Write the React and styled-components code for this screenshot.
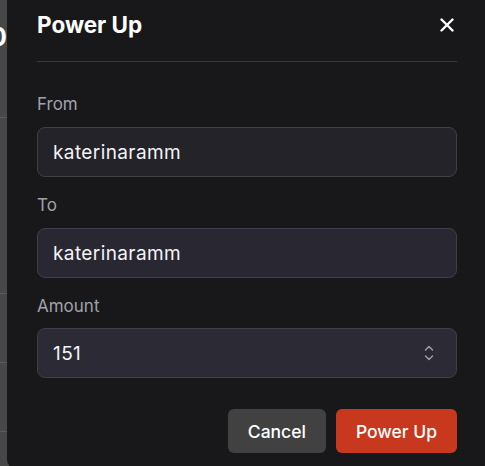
import React from "react";
import styled, { createGlobalStyle } from "styled-components";

const Global = createGlobalStyle`
  html, body { margin: 0; padding: 0; height: 100%; overflow: hidden; }
  body { background: #474747; font-family: Inter, "Noto Sans", sans-serif; }
  #root { height: 100%; }
`;

const Backdrop = styled.div`
  height: 100%;
  display: flex;
  flex-direction: column;
  background: #474747;
`;

const BgRow = styled.div`
  height: ${(p) => p.h}px;
  flex: none;
  border-bottom: 1px solid #5a5a5a;
  box-sizing: border-box;
  overflow: hidden;
  position: relative;
`;

const BgDigit = styled.span`
  display: block;
  margin: 22px 0 0 -10px;
  font-size: 25px;
  font-weight: 700;
  color: #ffffff;
  line-height: 30px;
`;

const Dialog = styled.div`
  position: fixed;
  left: 7px;
  top: -10px;
  width: 480px;
  height: 478px;
  box-sizing: border-box;
  padding: 0 30px;
  background: #18181b;
  border-radius: 8px;
  display: flex;
  flex-direction: column;
`;

const Header = styled.div`
  display: flex;
  align-items: center;
  justify-content: space-between;
  padding: 21px 0 22px;
  border-bottom: 1px solid #37373b;
`;

const Title = styled.h2`
  margin: 0;
  font-size: 22.5px;
  line-height: 28px;
  font-weight: 700;
  color: #ffffff;
`;

const CloseButton = styled.button`
  width: 20px;
  height: 20px;
  padding: 0;
  border: 0;
  background: transparent;
  display: flex;
  align-items: center;
  justify-content: center;
  color: #ffffff;
  cursor: pointer;
`;

const Body = styled.div`
  padding-top: 30px;
  display: flex;
  flex-direction: column;
  gap: 16px;
`;

const Field = styled.div`
  display: flex;
  flex-direction: column;
  gap: ${(p) => p.gap || 11}px;
`;

const Label = styled.label`
  font-size: 17px;
  line-height: 24px;
  color: #a1a1aa;
`;

const InputBox = styled.div`
  height: 50px;
  box-sizing: border-box;
  border: 1px solid #3f3f46;
  border-radius: 8px;
  background: ${(p) => p.bg};
  display: flex;
  align-items: center;
  padding: 0 22px 0 15px;
`;

const InputText = styled.span`
  flex: 1;
  font-size: 19px;
  letter-spacing: 0.4px;
  color: #f4f4f5;
`;

const Footer = styled.div`
  margin-top: 31px;
  display: flex;
  justify-content: flex-end;
  gap: 10px;
`;

const Button = styled.button`
  height: 44px;
  padding: 0 20px;
  border: 0;
  border-radius: 6px;
  font-family: Inter, "Noto Sans", sans-serif;
  font-size: 17.5px;
  font-weight: 500;
  color: #ffffff;
  background: ${(p) => (p.primary ? "#c8381f" : "#414141")};
  cursor: pointer;
`;

const XIcon = () => (
  <svg width="14" height="14" viewBox="0 0 14 14" fill="none">
    <path d="M1.5 1.5L12.5 12.5M12.5 1.5L1.5 12.5" stroke="currentColor" strokeWidth="2.4" strokeLinecap="round" />
  </svg>
);

const SpinIcon = () => (
  <svg width="10" height="16" viewBox="0 0 10 16" fill="none">
    <path d="M1.5 5L5 1.5L8.5 5M1.5 11L5 14.5L8.5 11" stroke="#9d9da8" strokeWidth="1.5" strokeLinecap="round" strokeLinejoin="round" />
  </svg>
);

export default function App() {
  return (
    <>
      <Global />
      <Backdrop>
        <BgRow h={118}>
          <BgDigit>0</BgDigit>
        </BgRow>
        <BgRow h={176} />
        <BgRow h={69} />
        <BgRow h={69} />
      </Backdrop>
      <Dialog>
        <Header>
          <Title>Power Up</Title>
          <CloseButton aria-label="Close">
            <XIcon />
          </CloseButton>
        </Header>
        <Body>
          <Field>
            <Label>From</Label>
            <InputBox bg="#232329">
              <InputText>katerinaramm</InputText>
            </InputBox>
          </Field>
          <Field>
            <Label>To</Label>
            <InputBox bg="#292832">
              <InputText>katerinaramm</InputText>
            </InputBox>
          </Field>
          <Field gap={10}>
            <Label>Amount</Label>
            <InputBox bg="#2b2a35">
              <InputText>151</InputText>
              <SpinIcon />
            </InputBox>
          </Field>
        </Body>
        <Footer>
          <Button>Cancel</Button>
          <Button primary>Power Up</Button>
        </Footer>
      </Dialog>
    </>
  );
}
